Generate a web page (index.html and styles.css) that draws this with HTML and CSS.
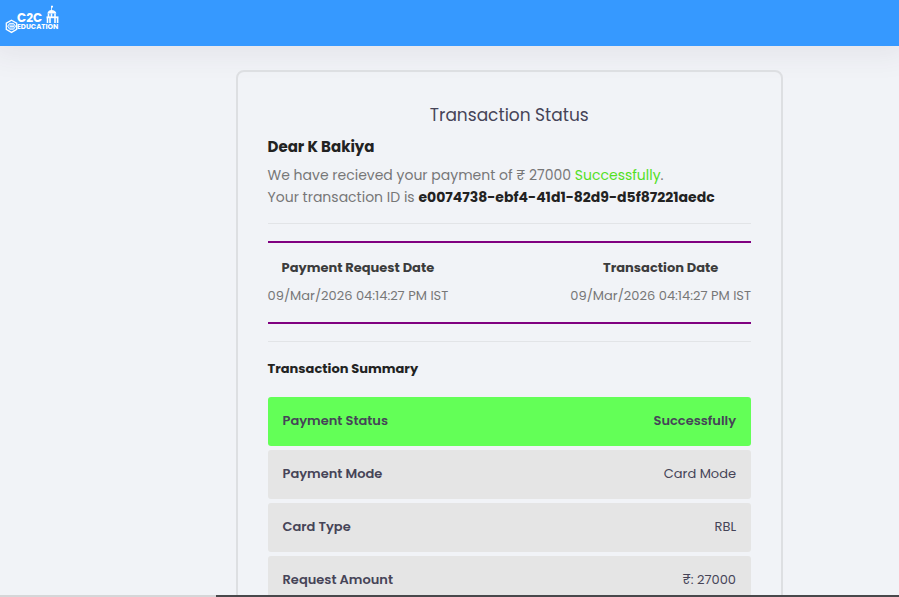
FILE: index.html
```
<!DOCTYPE html>
<html lang="en">
<head>
  <meta charset="UTF-8">
  <meta name="viewport" content="width=device-width, initial-scale=1.0">
  <title>Transaction Status</title>
  <link rel="stylesheet" href="styles.css">
</head>
<body>
  <header class="topbar">
    <a href="#" class="logo" aria-label="C2C Education">
      <svg width="58" height="30" viewBox="0 0 58 30" fill="none" stroke="#fff">
        <!-- hexagon mark -->
        <path d="M6.5 15.2 L11.7 18.2 V24.4 L6.5 27.4 L1.3 24.4 V18.2 Z" stroke-width="1.3"/>
        <path d="M4.6 18.4 h4 l2 2.9 l-2 2.9 h-4 l-2 -2.9 Z" fill="#fff" fill-opacity=".4" stroke-width=".9"/>
        <path d="M5 21.3 h4" stroke-width="1"/>
        <!-- campus building -->
        <path d="M46.5 1 v5" stroke-width=".8"/>
        <path d="M46 .8 h2 v1.6 h-2 Z" fill="#fff" stroke="none"/>
        <path d="M42.4 8.6 Q43 5 46.5 5 Q50.6 5 51.4 8.6 Z" fill="#fff" stroke="none"/>
        <path d="M43.5 8.5 v3.5 M46.5 8.5 v3.5 M50 8.5 v3.5" stroke-width="1.6"/>
        <path d="M41.5 11.4 h12 v1.8 h-12 Z" fill="#fff" stroke="none"/>
        <path d="M42.5 13 v5 M45 13 v5 M50 13 v5 M52.6 13 v5" stroke-width="1.6"/>
        <text class="logo-name" x="12" y="17">C2C</text>
        <text class="logo-sub" x="12" y="24">EDUCATION</text>
      </svg>
    </a>
  </header>

  <main class="content">
    <section class="card">
      <h1 class="card-title">Transaction Status</h1>
      <h2 class="greeting">Dear K Bakiya</h2>
      <p class="message">
        We have recieved your payment of ₹ 27000 <span class="success">Successfully</span>.<br>
        Your transaction ID is <strong>e0074738-ebf4-41d1-82d9-d5f87221aedc</strong>
      </p>
      <hr>
      <dl class="dates">
        <div class="date">
          <dt>Payment Request Date</dt>
          <dd>09/Mar/2026 04:14:27 PM IST</dd>
        </div>
        <div class="date">
          <dt>Transaction Date</dt>
          <dd>09/Mar/2026 04:14:27 PM IST</dd>
        </div>
      </dl>
      <hr>
      <h3 class="summary-title" id="summary">Transaction Summary</h3>
      <table class="summary" aria-labelledby="summary">
        <tbody>
          <tr class="paid">
            <th scope="row">Payment Status</th>
            <td>Successfully</td>
          </tr>
          <tr>
            <th scope="row">Payment Mode</th>
            <td>Card Mode</td>
          </tr>
          <tr>
            <th scope="row">Card Type</th>
            <td>RBL</td>
          </tr>
          <tr>
            <th scope="row">Request Amount</th>
            <td>₹: 27000</td>
          </tr>
        </tbody>
      </table>
    </section>
  </main>

  <div class="bottom-edge"></div>
</body>
</html>
```
FILE: styles.css
```
:root {
  --primary: #3699ff;
  --background: #f1f3f7;
  --text: #464457;
  --text-muted: #777777;
  --text-dark: #222222;
  --purple: #800080;
  --success: #53e01f;
  --paid: #63ff57;
  --row: #e5e5e5;
}

* {
  margin: 0;
  padding: 0;
  box-sizing: border-box;
}

html {
  scrollbar-width: none;
}

body {
  font-family: Poppins, Inter, sans-serif;
  font-size: 13px;
  background-color: var(--background);
  color: var(--text);
  overflow-x: hidden;
}

.topbar {
  display: flex;
  align-items: flex-start;
  height: 46px;
  padding: 5px;
  background-color: var(--primary);
  box-shadow: 0 0 30px 8px rgba(82, 50, 80, 0.08);
}

.logo,
.logo svg {
  display: block;
}

.logo text {
  fill: #fff;
  stroke: none;
  font-family: Poppins, Inter, sans-serif;
  font-weight: 700;
}

.logo-name {
  font-size: 12px;
}

.logo-sub {
  font-size: 7px;
}

.content {
  padding: 24px 12.9% 24px 26.2%;
}

.card {
  padding: 30px;
  border: 2px solid #dddfe2;
  border-radius: 8px;
}

.card-title {
  font-size: 17px;
  font-weight: 400;
  line-height: 26px;
  text-align: center;
}

.greeting {
  margin-top: 8px;
  color: var(--text-dark);
  font-size: 15px;
  font-weight: 700;
  line-height: 22px;
}

.message {
  margin-top: 6px;
  color: var(--text-muted);
  font-size: 14px;
  line-height: 22px;
}

.message strong {
  color: var(--text-dark);
  font-weight: 700;
}

.success {
  color: var(--success);
}

hr {
  margin: 15px 0 17px;
  border: none;
  border-top: 1px solid #e2e4e7;
}

.dates {
  display: flex;
  justify-content: space-between;
  padding: 15px 0 16px;
  border-top: 2px solid var(--purple);
  border-bottom: 2px solid var(--purple);
}

.dates + hr {
  margin: 17px 0 16px;
}

.date {
  text-align: center;
}

.date dt {
  color: #3c3c3c;
  font-size: 13px;
  font-weight: 700;
  line-height: 20px;
}

.date dd {
  margin-top: 8px;
  color: var(--text-muted);
  font-size: 13px;
  line-height: 20px;
}

.summary-title {
  color: var(--text-dark);
  font-size: 13px;
  font-weight: 700;
  line-height: 22px;
}

.summary {
  width: 100%;
  margin-top: 13px;
  border-spacing: 0 4px;
  line-height: 19px;
}

.summary th,
.summary td {
  padding: 14px 15px 16px;
  background-color: var(--row);
}

.summary th {
  border-radius: 3px 0 0 3px;
  font-weight: 600;
  text-align: left;
}

.summary td {
  border-radius: 0 3px 3px 0;
  text-align: right;
}

.summary .paid th,
.summary .paid td {
  background-color: var(--paid);
  font-weight: 600;
}

/* thin strip along the bottom of the window */
.bottom-edge {
  position: fixed;
  right: 0;
  bottom: 0;
  left: 0;
  height: 2px;
  background: linear-gradient(to right, #d5d6d8 24%, #48484b 24%);
}
```
